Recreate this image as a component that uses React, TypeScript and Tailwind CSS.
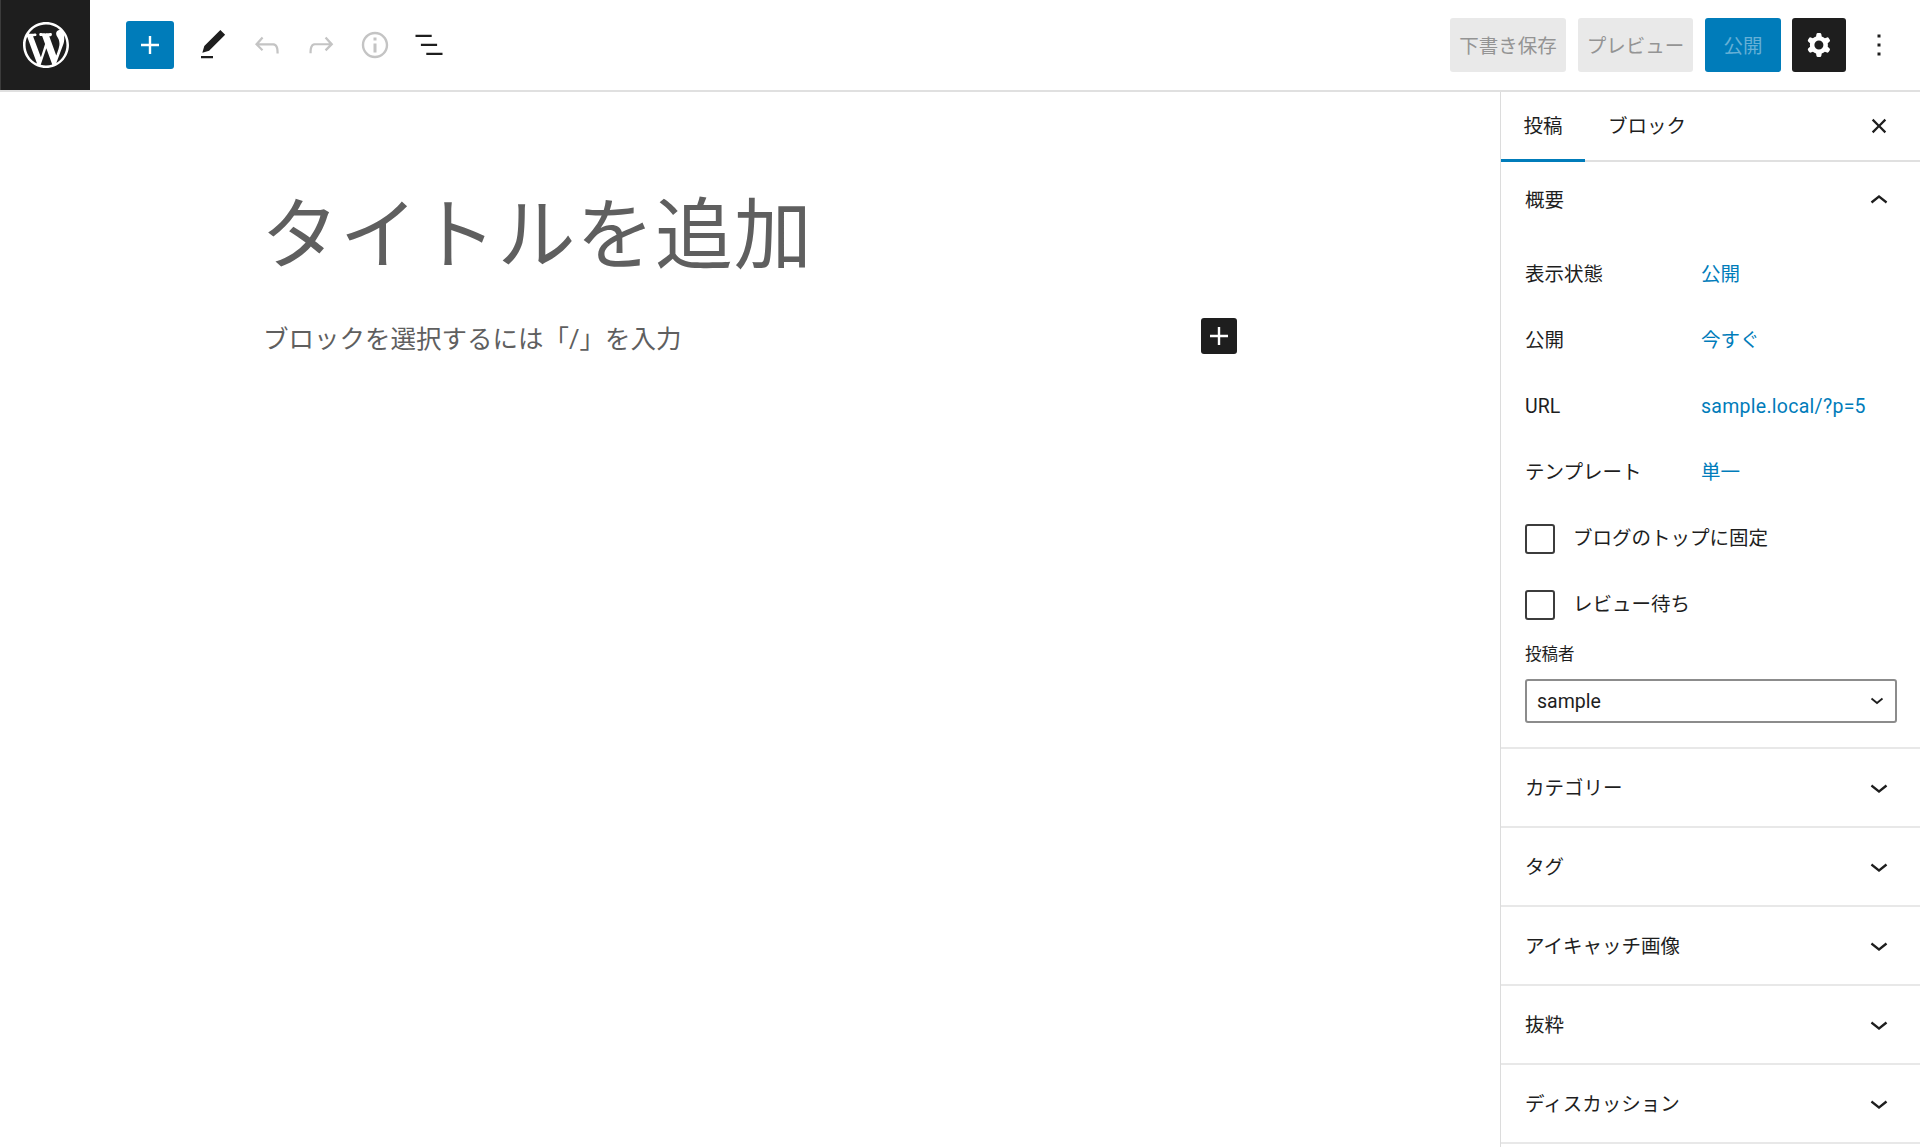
import React from "react";

const FONT = "font-['Roboto','Noto_Sans_CJK_JP',sans-serif]";

function Icon({ d, className = "", size = 36, box = 24 }: { d: string; className?: string; size?: number; box?: number }) {
  return (
    <svg width={size} height={size} viewBox={`0 0 ${box} ${box}`} className={`fill-current shrink-0 ${className}`}>
      <path d={d} fillRule="evenodd" />
    </svg>
  );
}

const P = {
  plus: "M18 11.2h-5.2V6h-1.6v5.2H6v1.6h5.2V18h1.6v-5.2H18z",
  edit: "M20.1 5.1L16.9 2 6.2 12.7l-1.3 4.4 4.5-1.3L20.1 5.1zM4 20.8h8v-1.5H4v1.5z",
  undo: "M18.3 11.7c-.6-.6-1.4-.9-2.3-.9H6.7l2.9-3.3-1.1-1-4.5 5L8.5 16l1-1-2.7-2.7H16c.5 0 .9.2 1.3.5 1 1 1 3.4 1 4.5v.3h1.5v-.2c0-1.5 0-4.3-1.5-5.7z",
  redo: "M15.6 6.5l-1.1 1 2.9 3.3H8c-.9 0-1.7.3-2.3.9-1.4 1.5-1.4 4.2-1.4 5.6v.2h1.5v-.3c0-1.1 0-3.5 1-4.5.3-.3.7-.5 1.3-.5h9.2L14.5 15l1.1 1.1 4.6-4.6-4.6-5z",
  info: "M12 3.2c-4.8 0-8.8 3.9-8.8 8.8 0 4.8 3.9 8.8 8.8 8.8 4.8 0 8.8-3.9 8.8-8.8 0-4.8-4-8.8-8.8-8.8zm0 16c-4 0-7.2-3.3-7.2-7.2C4.8 8 8 4.8 12 4.8s7.2 3.3 7.2 7.2c0 4-3.2 7.2-7.2 7.2zM11 17h2v-6h-2v6zm0-8h2V7h-2v2z",
  list: "M13.8 5.2H3v1.5h10.8V5.2zm-3.6 12v1.5H21v-1.5H10.2zm7.2-6H6.6v1.5h10.8v-1.5z",
  cog: "M10.289 4.836A1 1 0 0111.275 4h1.306a1 1 0 01.987.836l.244 1.466c.787.26 1.503.679 2.108 1.218l1.393-.522a1 1 0 011.216.437l.653 1.13a1 1 0 01-.23 1.273l-1.148.944a6.025 6.025 0 010 2.435l1.149.946a1 1 0 01.23 1.272l-.653 1.13a1 1 0 01-1.216.437l-1.394-.522c-.605.54-1.32.958-2.108 1.218l-.244 1.466a1 1 0 01-.987.836h-1.306a1 1 0 01-.986-.836l-.244-1.466a5.995 5.995 0 01-2.108-1.218l-1.394.522a1 1 0 01-1.217-.436l-.653-1.131a1 1 0 01.23-1.272l1.149-.946a6.026 6.026 0 010-2.435l-1.148-.944a1 1 0 01-.23-1.272l.653-1.131a1 1 0 011.217-.437l1.393.522a5.994 5.994 0 012.108-1.218l.244-1.466zM14.929 12a3 3 0 11-6 0 3 3 0 016 0z",
  more: "M13 19h-2v-2h2v2zm0-6h-2v-2h2v2zm0-6h-2V5h2v2z",
  close: "M12 13.06l3.712 3.713 1.061-1.06L13.061 12l3.712-3.712-1.06-1.06L12 10.938 8.288 7.227l-1.061 1.06L10.939 12l-3.712 3.712 1.06 1.061L12 13.061z",
  down: "M17.5 11.6L12 16l-5.5-4.4.9-1.2L12 14l4.5-3.6 1 1.2z",
  up: "M6.5 12.4L12 8l5.5 4.4-.9 1.2L12 10l-4.5 3.6-1-1.2z",
  wp: "M20 10c0-5.51-4.49-10-10-10C4.48 0 0 4.49 0 10c0 5.52 4.48 10 10 10 5.51 0 10-4.48 10-10zM7.78 15.37L4.37 6.22c.55-.02 1.17-.08 1.17-.08.5-.06.44-1.13-.06-1.11 0 0-1.45.11-2.37.11-.18 0-.37 0-.58-.01C4.12 2.69 6.87 1.11 10 1.11c2.33 0 4.45.87 6.05 2.34-.68-.11-1.65.39-1.65 1.58 0 .74.45 1.36.9 2.1.35.61.55 1.36.55 2.46 0 1.49-1.4 5-1.4 5l-3.03-8.37c.54-.02.82-.17.82-.17.5-.05.44-1.25-.06-1.22 0 0-1.44.12-2.38.12-.87 0-2.33-.12-2.33-.12-.5-.03-.56 1.2-.06 1.22l.92.08 1.26 3.41zM17.41 10c.24-.64.74-1.87.43-4.25.7 1.29 1.05 2.71 1.05 4.25 0 3.29-1.73 6.24-4.4 7.78.97-2.59 1.94-5.2 2.92-7.78zM6.1 18.09C3.12 16.65 1.11 13.53 1.11 10c0-1.3.23-2.48.72-3.59C3.25 10.3 4.67 14.2 6.1 18.09zm4.03-6.63l2.58 6.98c-.86.29-1.76.45-2.71.45-.79 0-1.57-.11-2.29-.33.81-2.38 1.62-4.74 2.42-7.1z",
};

function MetaRow({ label, value, link = "" }: { label: string; value: string; link?: string }) {
  return (
    <div className="h-[66px] flex items-center">
      <span className="w-[176px] shrink-0">{label}</span>
      <span className={`text-[#007cba] ${link}`}>{value}</span>
    </div>
  );
}

function CheckRow({ label }: { label: string }) {
  return (
    <div className="h-[66px] flex items-center">
      <span className="w-[30px] h-[30px] border-2 border-[#3c3c3c] rounded-[3px] bg-white shrink-0" />
      <span className="ml-[18px]">{label}</span>
    </div>
  );
}

function Section({ title }: { title: string }) {
  return (
    <div className="h-[79px] border-b-2 border-[#e8e8e8] flex items-center justify-between pl-[24px] pr-[23px]">
      <span className="pt-[2px]">{title}</span>
      <Icon d={P.down} className="-mt-[2px]" />
    </div>
  );
}

export default function App() {
  return (
    <div className={`${FONT} w-[1920px] h-[1147px] overflow-hidden bg-white text-[#1e1e1e] text-[19.5px] flex flex-col`}>
      <header className="h-[92px] shrink-0 border-b-2 border-[#e0e0e0] flex items-center">
        <div className="w-[90px] h-[90px] bg-[#1e1e1e] border-l border-[#3c3c3c] flex items-center justify-center text-white">
          <Icon d={P.wp} box={20} size={46} />
        </div>
        <div className="ml-9 w-12 h-12 rounded-[3px] bg-[#007cba] text-white flex items-center justify-center">
          <Icon d={P.plus} />
        </div>
        <div className="ml-[21px] flex items-center gap-[18px]">
          <Icon d={P.edit} className="text-[#1e1e1e]" />
          <Icon d={P.undo} className="text-[#c4c4c4]" />
          <Icon d={P.redo} className="text-[#c4c4c4]" />
          <Icon d={P.info} className="text-[#c4c4c4]" />
          <Icon d={P.list} className="text-[#1e1e1e]" />
        </div>
        <div className="ml-auto flex items-center pr-[23px]">
          <div className="h-[54px] w-[116px] pt-[3px] rounded-[3px] bg-[#e9e9e9] text-[#949494] flex items-center justify-center">下書き保存</div>
          <div className="ml-3 h-[54px] w-[115px] pt-[3px] rounded-[3px] bg-[#e9e9e9] text-[#949494] flex items-center justify-center">プレビュー</div>
          <div className="ml-3 h-[54px] w-[76px] pt-[3px] rounded-[3px] bg-[#007cba] text-[#66b0d6] flex items-center justify-center">公開</div>
          <div className="ml-[11px] h-[54px] w-[54px] rounded-[3px] bg-[#1e1e1e] text-white flex items-center justify-center">
            <Icon d={P.cog} />
          </div>
          <Icon d={P.more} className="ml-[15px]" />
        </div>
      </header>

      <div className="flex-1 min-h-0 flex">
        <main className="flex-1 min-w-0 text-[#5f5f5f]">
          <div className="w-[974px] mx-auto">
            <h1 className="mt-[92px] h-[106px] -ml-[2px] flex items-center text-[78px] tracking-[0.8px] leading-none">タイトルを追加</h1>
            <div className="mt-[28px] h-[36px] flex items-center justify-between text-[25.5px]">
              <span className="pt-[6px]">ブロックを選択するには「/」を入力</span>
              <span className="w-9 h-9 rounded-[3px] bg-[#1e1e1e] text-white flex items-center justify-center">
                <Icon d={P.plus} />
              </span>
            </div>
          </div>
        </main>

        <aside className="w-[420px] shrink-0 border-l border-[#dcdcdc]">
          <div className="h-[70px] border-b-2 border-[#e0e0e0] flex items-stretch pr-[23px]">
            <div className="w-[84px] pt-[2px] flex items-center justify-center border-b-[3px] -mb-[2px] border-[#007cba]">投稿</div>
            <div className="ml-[9px] pt-[2px] px-[14px] flex items-center">ブロック</div>
            <Icon d={P.close} className="ml-auto self-center" />
          </div>
          <div className="border-b-2 border-[#e8e8e8] pl-[24px] pr-[23px] pb-[24px]">
            <div className="h-[78px] mb-[2px] flex items-center justify-between">
              <span>概要</span>
              <Icon d={P.up} />
            </div>
            <MetaRow label="表示状態" value="公開" />
            <MetaRow label="公開" value="今すぐ" />
            <MetaRow label="URL" value="sample.local/?p=5" link="tracking-[0.27px]" />
            <MetaRow label="テンプレート" value="単一" />
            <CheckRow label="ブログのトップに固定" />
            <CheckRow label="レビュー待ち" />
            <div className="text-[16.5px] leading-[24px] mt-[5px] mb-[12px]">投稿者</div>
            <div className="w-[372px] h-[44px] border-2 border-[#8c8c8c] rounded-[3px] flex items-center justify-between pl-[10px] pr-[10px]">
              <span className="pt-[2px]">sample</span>
              <svg width="16" height="16" viewBox="0 0 16 16" className="fill-none stroke-[#1e1e1e] stroke-[1.8]">
                <path d="M2.5 5.5 8 10l5.5-4.5" />
              </svg>
            </div>
          </div>
          <Section title="カテゴリー" />
          <Section title="タグ" />
          <Section title="アイキャッチ画像" />
          <Section title="抜粋" />
          <Section title="ディスカッション" />
        </aside>
      </div>
    </div>
  );
}
